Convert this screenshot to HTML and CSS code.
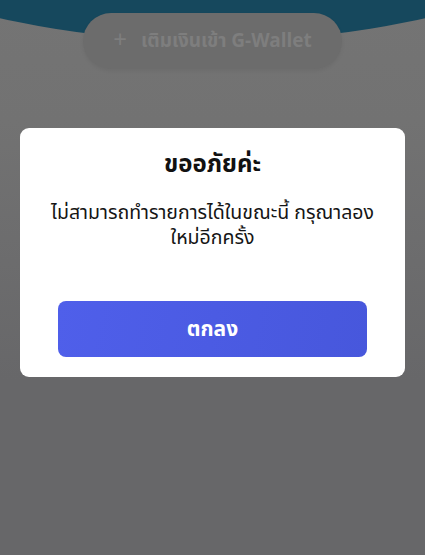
FILE: index.html
```html
<!DOCTYPE html>
<html lang="th">
<head>
<meta charset="utf-8">
<title>ขออภัยค่ะ</title>
<link rel="stylesheet" href="styles.css">
</head>
<body>
<div class="screen">
  <div class="header"></div>
  <div class="topbar">
    <div class="topup"><span class="plus">+</span><span>เติมเงินเข้า G-Wallet</span></div>
  </div>
  <div class="overlay">
    <div class="modal">
      <h1 class="title">ขออภัยค่ะ</h1>
      <p class="msg"><span class="line">ไม่สามารถทำรายการได้ในขณะนี้ กรุณาลอง</span><span class="line">ใหม่อีกครั้ง</span></p>
      <button class="ok">ตกลง</button>
    </div>
  </div>
</div>
</body>
</html>
```
FILE: styles.css
```css
* { box-sizing: border-box; }
html, body { margin: 0; padding: 0; }
body {
  width: 425px;
  height: 555px;
  overflow: hidden;
  background: #676769;
  font-family: "Noto Sans Thai", "Noto Sans", "Liberation Sans", sans-serif;
}
.screen {
  position: relative;
  width: 425px;
  height: 555px;
  background: linear-gradient(#747474 0, #727272 120px, #676769 380px);
  overflow: hidden;
}
.header {
  position: absolute;
  left: -200px;
  top: -279px;
  width: 825px;
  height: 320px;
  border-radius: 50%;
  background: #16485d;
}
.topbar {
  position: relative;
  display: flex;
  justify-content: center;
  padding-top: 13px;
}
.topup {
  width: 259px;
  height: 56px;
  border-radius: 28px;
  background: #6c6c6c;
  color: #7e7e7e;
  display: flex;
  align-items: center;
  justify-content: center;
  gap: 14px;
  font-size: 19px;
  font-weight: 700;
  box-shadow: 0 2px 4px rgba(0,0,0,0.06);
}
.plus { font-size: 24px; font-weight: 400; }
.overlay {
  display: flex;
  justify-content: center;
  padding-top: 59px;
}
.modal {
  width: 385px;
  height: 249px;
  background: #fff;
  border-radius: 9px;
  display: flex;
  flex-direction: column;
  align-items: center;
  padding-top: 21px;
}
.title {
  margin: 0;
  font-size: 24px;
  font-weight: 700;
  color: #111;
  line-height: 32px;
}
.msg {
  margin: 20px 0 0;
  display: flex;
  flex-direction: column;
  align-items: center;
  font-size: 19.5px;
  color: #151515;
  text-align: center;
  white-space: nowrap;
}
.line { display: block; line-height: 25px; }
.ok {
  margin-top: 50px;
  width: 309px;
  height: 56px;
  flex: none;
  border: 0;
  border-radius: 8px;
  background: linear-gradient(100deg, #4f5fea, #4757dc);
  color: #fff;
  font-family: inherit;
  font-size: 21px;
  font-weight: 700;
}
```
